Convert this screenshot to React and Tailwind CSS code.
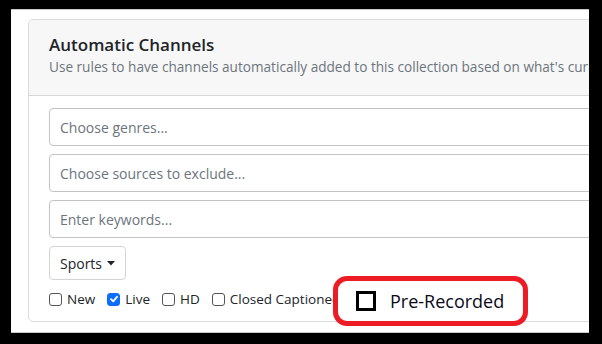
import React from "react";

const font = { fontFamily: '"Open Sans", "Noto Sans", sans-serif' };

function Check({ checked }) {
  if (checked) {
    return (
      <span className="w-[13px] h-[13px] rounded-[3px] bg-[#0d6efd] border border-[#0d6efd] flex items-center justify-center shrink-0">
        <svg width="10" height="10" viewBox="0 0 10 10">
          <path d="M2 5.2 L4.2 7.3 L8 2.8" fill="none" stroke="white" strokeWidth="1.8" strokeLinecap="round" strokeLinejoin="round" />
        </svg>
      </span>
    );
  }
  return <span className="w-[13px] h-[13px] rounded-[3px] bg-white border border-[#555] shrink-0" />;
}

export default function App() {
  return (
    <div className="relative w-[602px] h-[344px] bg-black pt-[9px] pl-[11px] overflow-hidden" style={font}>
      <div className="w-[578px] h-[324px] bg-white border-t border-b border-[#c8c8c8] overflow-hidden pl-[17px] pt-[9px]">
        <div className="w-[640px] h-[303px] border border-[#dcdcdc] rounded-[5px] overflow-hidden">
          <div className="bg-[#f7f7f7] border-b border-[#d6d6d6] h-[76px] pl-[20px] pt-[13px]">
            <div className="text-[17px] leading-[24px] font-semibold text-[#212529]">Automatic Channels</div>
            <div className="text-[13.6px] leading-[20px] text-[#6c757d] whitespace-nowrap">
              Use rules to have channels automatically added to this collection based on what's currently airing.
            </div>
          </div>
          <div className="pl-[20px] pt-[12px] flex flex-col gap-[8px]">
            {["Choose genres...", "Choose sources to exclude...", "Enter keywords..."].map((t) => (
              <div key={t} className="h-[38px] w-[600px] border border-[#c4c4c4] rounded-[4px] flex items-center pl-[10px] text-[14px] text-[#6c757d]">
                {t}
              </div>
            ))}
            <div className="h-[34px] w-[77px] border border-[#d4d4d4] rounded-[4px] flex items-center justify-center gap-[5px] text-[14px] text-[#212529]">
              Sports
              <svg width="8" height="5" viewBox="0 0 8 5"><path d="M0 0 L8 0 L4 4.5 Z" fill="#212529" /></svg>
            </div>
            <div className="flex items-center h-[22px] text-[13.5px] text-[#212529]">
              <div className="flex items-center gap-[5px] mr-[12px]"><Check /> <span>New</span></div>
              <div className="flex items-center gap-[5px] mr-[12px]"><Check checked /> <span>Live</span></div>
              <div className="flex items-center gap-[5px] mr-[12px]"><Check /> <span>HD</span></div>
              <div className="flex items-center gap-[5px]"><Check /> <span>Closed Captioned</span></div>
            </div>
          </div>
        </div>
      </div>
      <div className="absolute left-[333px] top-[276px] w-[195px] h-[50px] border-[5px] border-[#ed1c24] rounded-[14px] bg-white flex items-center pl-[18px]">
        <span className="w-[20px] h-[20px] border-[3px] border-black shrink-0" />
        <span className="ml-[14px] text-[18px] text-[#0a0a1a]">Pre-Recorded</span>
      </div>
    </div>
  );
}
